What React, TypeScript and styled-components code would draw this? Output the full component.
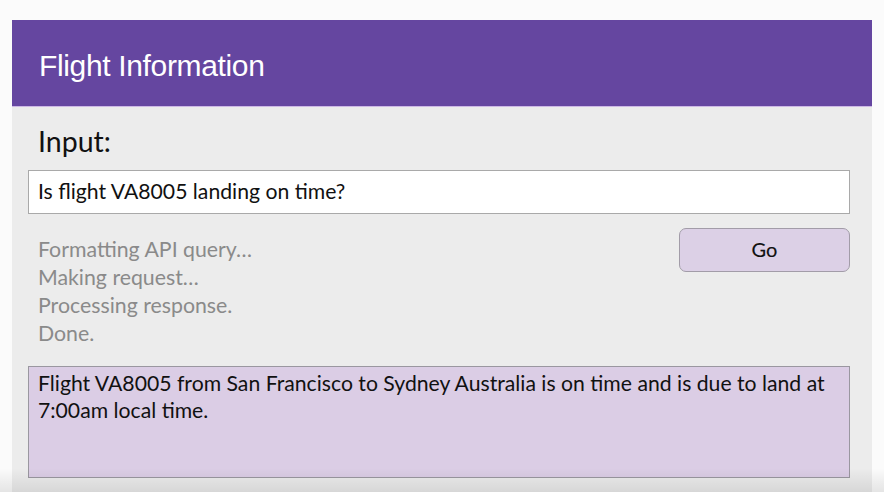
import React from "react";
import styled, { createGlobalStyle } from "styled-components";

const Global = createGlobalStyle`
  html, body { margin: 0; padding: 0; background: #fbfbfb; }
  body { width: 884px; height: 492px; overflow: hidden; position: relative; }
`;

const Page = styled.div`
  padding: 20px 12px 0 12px;
  height: 492px;
  box-sizing: border-box;
  position: relative;
  &::after {
    content: "";
    position: absolute;
    left: 0; right: 0; bottom: 0;
    height: 24px;
    background: linear-gradient(to bottom, rgba(0,0,0,0), rgba(0,0,0,0.09));
    pointer-events: none;
  }
`;

const Panel = styled.div`
  background: #ececec;
  height: 472px;
  display: flex;
  flex-direction: column;
`;

const Header = styled.header`
  height: 87px;
  background: #6546a0;
  border-bottom: 1px solid #cdb8e6;
  display: flex;
  align-items: center;
  padding-left: 27px;
  padding-top: 5px;
  box-sizing: border-box;
`;

const Title = styled.h1`
  margin: 0;
  font-family: "Liberation Sans", Arial, sans-serif;
  font-weight: 400;
  font-size: 30px;
  color: #ffffff;
  letter-spacing: -0.35px;
`;

const Body = styled.div`
  padding: 0 22px 0 16px;
  display: flex;
  flex-direction: column;
  font-family: Lato, "Open Sans", sans-serif;
`;

const Label = styled.div`
  margin: 17px 0 0 10px;
  font-size: 28.5px;
  line-height: 34px;
  color: #111;
`;

const InputBox = styled.div`
  margin-top: 12px;
  height: 44px;
  box-sizing: border-box;
  background: #ffffff;
  border: 1px solid #a9a9a9;
  padding: 0 9px 2px;
  display: flex;
  align-items: center;
  font-size: 21.2px;
  color: #111;
`;

const Row = styled.div`
  margin-top: 14px;
  display: flex;
  justify-content: space-between;
  align-items: flex-start;
`;

const Status = styled.div`
  margin-left: 10px;
  padding-top: 7px;
  display: flex;
  flex-direction: column;
  font-size: 21.3px;
  line-height: 28px;
  color: #8a8a8a;
`;

const GoButton = styled.button`
  width: 171px;
  height: 44px;
  background: #dcd0e6;
  border: 1px solid #a29ca8;
  border-radius: 7px;
  font-family: Lato, "Open Sans", sans-serif;
  font-size: 20px;
  color: #111;
  -webkit-text-stroke: 0.15px #111;
  padding: 0 0 2px;
`;

const Output = styled.div`
  margin-top: 19px;
  height: 112px;
  box-sizing: border-box;
  background: #dbcde5;
  border: 1px solid #9a97a0;
  padding: 3px 9px;
  font-size: 21.2px;
  line-height: 27px;
  color: #111;
`;

export default function App() {
  return (
    <>
      <Global />
      <Page>
        <Panel>
          <Header>
            <Title>Flight Information</Title>
          </Header>
          <Body>
            <Label>Input:</Label>
            <InputBox>Is flight VA8005 landing on time?</InputBox>
            <Row>
              <Status>
                <span>Formatting API query…</span>
                <span>Making request…</span>
                <span>Processing response.</span>
                <span>Done.</span>
              </Status>
              <GoButton>Go</GoButton>
            </Row>
            <Output>
              Flight VA8005 from San Francisco to Sydney Australia is on time and is due to land at 7:00am local time.
            </Output>
          </Body>
        </Panel>
      </Page>
    </>
  );
}
